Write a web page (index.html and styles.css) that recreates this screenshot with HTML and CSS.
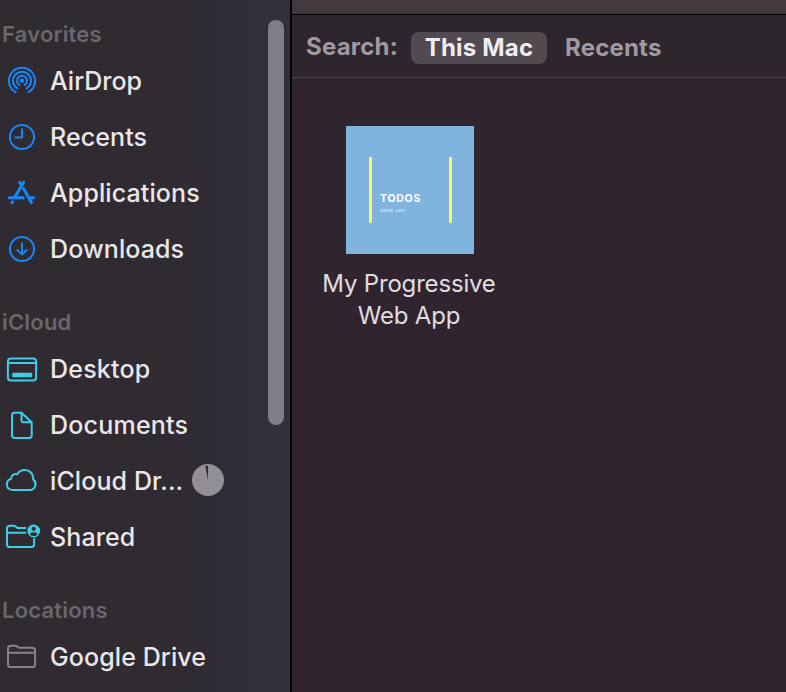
FILE: index.html
```
<!DOCTYPE html>
<html lang="en">
<head>
<meta charset="utf-8">
<title>Finder</title>
<link rel="stylesheet" href="styles.css">
</head>
<body>
<div class="window">
  <nav class="sidebar">
    <h2 class="heading first">Favorites</h2>
    <div class="row blue"><svg class="icon" viewBox="0 0 44 56"><circle cx="22" cy="27.7" r="2.3" fill="currentColor" stroke="none"/><path d="M19.3 31.9A5 5 0 1 1 24.7 31.9M17.3 35.4A9 9 0 1 1 26.7 35.4M15.5 39.2A13.1 13.1 0 1 1 28.5 39.2"/></svg><span class="label tight">AirDrop</span></div>
    <div class="row blue"><svg class="icon" viewBox="0 0 44 56"><circle cx="22" cy="28" r="12.1"/><path d="M22 20V28.5H15.2"/></svg><span class="label">Recents</span></div>
    <div class="row blue"><svg class="icon" viewBox="0 0 44 56"><path class="thick" d="M19.7 17.4L21.7 20.8M23.6 17.4L15.2 31.4M9.2 32.7H23.3M29.3 32.7H33.6M23.6 23.6L31.4 37.6M12.6 36.8L12 37.8"/></svg><span class="label">Applications</span></div>
    <div class="row blue"><svg class="icon" viewBox="0 0 44 56"><circle cx="22" cy="28" r="12.1"/><path d="M22 22.2V33.3M17.4 29L22 33.6L26.6 29"/></svg><span class="label">Downloads</span></div>
    <h2 class="heading">iCloud</h2>
    <div class="row cyan"><svg class="icon" viewBox="0 0 44 56"><rect x="7.9" y="17.4" width="28.2" height="22.2" rx="3"/><path d="M8 22H36"/><rect x="12.2" y="31.8" width="20" height="4.4" rx="1" fill="currentColor" stroke="none"/></svg><span class="label loose">Desktop</span></div>
    <div class="row cyan"><svg class="icon" viewBox="0 0 44 56"><path d="M14.5 15.7H21.5L31.7 25.3V38.2Q31.7 41 28.9 41H14.8Q12 41 12 38.2V18.3Q12 15.7 14.5 15.7ZM21.5 15.7V23.5Q21.5 25.3 23.3 25.3H31.7"/></svg><span class="label loose">Documents</span></div>
    <div class="row cyan"><svg class="icon" viewBox="0 0 44 56"><path d="M13 37H31A6 6 0 0 0 33.2 26.4C33.5 20.6 29.5 17 24.8 17C21.3 17 18.7 18.7 17.2 21.2C13.8 20.4 11 22.6 11 25.9C5 27.8 5.4 37 13 37Z"/></svg><span class="label">iCloud Dr...</span><svg class="progress" viewBox="0 0 32 32"><circle cx="16" cy="16" r="16"/><path d="M16 16L13.3 2L16 1.8Z"/></svg></div>
    <div class="row cyan"><svg class="icon" viewBox="0 0 44 56"><path d="M25.5 19.1H17.5L15.7 17.5Q14.8 16.7 13.5 16.7H10Q7 16.7 7 19.7V35.2Q7 38.1 10 38.1H31.2Q34.1 38.1 34.1 35.2V30M7 23.8H25.5"/><circle cx="33.7" cy="22" r="6.4" fill="currentColor" stroke="none"/><circle cx="33.7" cy="19.8" r="2.1" fill="#302b31" stroke="none"/><path d="M29.8 25.7Q30.6 23.3 33.7 23.3T37.6 25.7Q33.7 28.4 29.8 25.7Z" fill="#302b31" stroke="none"/></svg><span class="label">Shared</span></div>
    <h2 class="heading">Locations</h2>
    <div class="row gray"><svg class="icon" viewBox="0 0 44 56"><path d="M18.8 18.8L17 17.4Q16 16.7 14.7 16.7H11Q8 16.7 8 19.7V35.2Q8 38.1 11 38.1H32.2Q35.1 38.1 35.1 35.2V21.8Q35.1 18.8 32.2 18.8ZM8 23.8H35"/></svg><span class="label">Google Drive</span></div>
    <div class="scrollbar"></div>
  </nav>
  <main class="content">
    <div class="toolbar"></div>
    <div class="scope">
      <span class="scope-name">Search:</span>
      <span class="scope-item active">This Mac</span>
      <span class="scope-item">Recents</span>
    </div>
    <div class="files">
      <div class="file">
        <div class="art">
          <div class="art-text"><div class="art-title">TODOS</div><div class="art-sub">SINCE 2021</div></div>
        </div>
        <div class="file-name"><div class="line1">My Progressive</div><div>Web App</div></div>
      </div>
    </div>
  </main>
</div>
</body>
</html>
```
FILE: styles.css
```
* { box-sizing: border-box; }
body { margin: 0; font-family: Inter, "Liberation Sans", sans-serif; background: #30252e; overflow: hidden; }
.window { display: flex; width: 786px; height: 692px; overflow: hidden; }
.sidebar { position: relative; flex: 0 0 292px; border-right: 2px solid #000; background: linear-gradient(90deg, #302b31 0, #302b31 55%, #302c34 72%, #332f3b 90%); overflow: hidden; }
.heading { margin: 0; height: 64px; padding: 26px 0 0 2px; font-size: 22px; font-weight: 600; line-height: 38px; letter-spacing: .2px; color: #6b656c; }
.heading.first { height: 53px; padding-top: 15px; }
.row { display: flex; align-items: center; height: 56px; }
.icon { width: 44px; height: 56px; margin-right: 6px; fill: none; stroke: currentColor; stroke-width: 2; stroke-linecap: round; stroke-linejoin: round; flex: none; }
.thick { stroke-width: 3; }
.blue { color: #1686fa; }
.cyan { color: #40cbe8; }
.gray { color: #868287; }
.label { font-size: 25px; font-weight: 500; line-height: 32px; letter-spacing: .1px; color: #e9e7e9; white-space: nowrap; }
.tight { letter-spacing: 0; }
.loose { letter-spacing: .22px; }
.progress { width: 32px; height: 32px; margin: -2px 0 0 9px; fill: #948f95; }
.progress path { fill: #302b31; }
.scrollbar { position: absolute; left: 268px; top: 20px; width: 16px; height: 405px; border-radius: 8px; background: #817d87; }
.content { flex: 1; display: flex; flex-direction: column; }
.toolbar { height: 15px; background: #41393f; border-bottom: 1px solid #000; }
.scope { display: flex; align-items: center; height: 63px; padding: 2px 0 0 14px; background: #2d262d; border-bottom: 1px solid #4a434a; font-size: 24px; font-weight: 700; letter-spacing: .2px; color: #a199a2; }
.scope-name { width: 105px; line-height: 32px; padding-bottom: 1px; }
.scope-item { height: 32px; margin-top: 2px; line-height: 31px; white-space: nowrap; }
.active { width: 136px; margin-right: 18px; text-align: center; border-radius: 8px; background: #514a51; color: #efedef; letter-spacing: .2px; }
.files { padding: 48px 0 0 17px; }
.file { width: 200px; display: flex; flex-direction: column; align-items: center; }
.art { width: 128px; height: 128px; margin-left: 2px; padding: 31px 22px 0 23px; background: #80b3de; }
.art-text { height: 66px; padding: 36px 0 0 8px; border: solid #fdf55c; border-width: 0 3px; color: #fff; font-family: Inter, sans-serif; white-space: nowrap; }
.art-title { font-size: 10.5px; line-height: 11px; font-weight: 700; letter-spacing: .75px; }
.art-sub { margin-top: 4px; font-size: 4px; line-height: 5px; letter-spacing: .35px; }
.file-name { margin-top: 14px; font-size: 24px; line-height: 32px; letter-spacing: -.18px; text-align: center; color: #e0dde0; white-space: nowrap; }
```
